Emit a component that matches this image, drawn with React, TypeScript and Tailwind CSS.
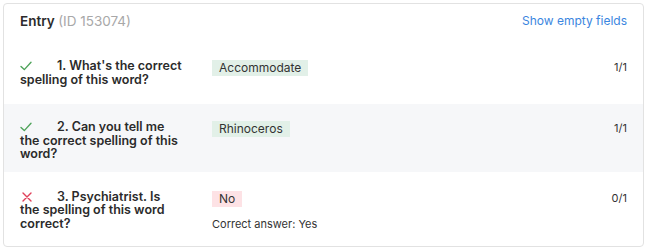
import React from 'react';

type Item = {
  n: number;
  question: string;
  answer: string;
  ok: boolean;
  score: string;
  correct?: string;
};

const items: Item[] = [
  { n: 1, question: "What's the correct spelling of this word?", answer: 'Accommodate', ok: true, score: '1/1' },
  { n: 2, question: 'Can you tell me the correct spelling of this word?', answer: 'Rhinoceros', ok: true, score: '1/1' },
  { n: 3, question: 'Psychiatrist. Is the spelling of this word correct?', answer: 'No', ok: false, score: '0/1', correct: 'Yes' },
];

function Check() {
  return (
    <svg width="12" height="10" viewBox="0 0 12 10" fill="none" className="inline-block align-[-1px]">
      <path d="M1 5.5 L4.3 8.6 L11 1.2" stroke="#4fa35b" strokeWidth="1.4" strokeLinecap="round" strokeLinejoin="round" />
    </svg>
  );
}

function Cross() {
  return (
    <svg width="10" height="10" viewBox="0 0 10 10" fill="none" className="inline-block align-[-1px] ml-[2px]">
      <path d="M1 1 L9 9 M9 1 L1 9" stroke="#e0405a" strokeWidth="1.4" strokeLinecap="round" />
    </svg>
  );
}

export default function App() {
  return (
    <div className="bg-white p-[3px] font-['Inter',sans-serif] text-[#2b2b2b]">
      <div className="w-[641px] h-[244px] overflow-hidden rounded-[4px] border border-[#e2e2e2]">
        <div className="flex items-center justify-between px-4 pt-[7px] pb-[14px]">
          <div className="text-[13.5px] leading-5 font-semibold">
            Entry <span className="font-normal text-[#a8a8a8]">(ID 153074)</span>
          </div>
          <a className="text-[12px] text-[#3b86e0]">Show empty fields</a>
        </div>

        {items.map((item) => (
          <div
            key={item.n}
            className={`flex px-4 ${item.n === 2 ? 'bg-[#f6f7f9] pt-[16px] pb-[11px]' : item.n === 1 ? 'pt-[14px] pb-[18px]' : 'pt-[18px] pb-[12px]'}`}
          >
            <div className="w-[162px] shrink-0 text-[12.5px] leading-[13.5px] font-semibold">
              <span className="inline-block w-[37px]">{item.ok ? <Check /> : <Cross />}</span>
              {item.n}. {item.question}
            </div>
            <div className="flex flex-1 flex-col items-start pl-[30px] mt-[1px]">
              <span
                className={`block px-[7px] text-[12px] leading-4 text-[#333] ${item.ok ? 'bg-[#e2f0e8]' : 'bg-[#fde2e5]'}`}
              >
                {item.answer}
              </span>
              {item.correct && (
                <div className="mt-[10px] text-[11px] leading-[14px] text-[#333]">Correct answer: {item.correct}</div>
              )}
            </div>
            <div className="pt-[1px] text-[11px] leading-[14px] text-[#333]">{item.score}</div>
          </div>
        ))}
      </div>
    </div>
  );
}
